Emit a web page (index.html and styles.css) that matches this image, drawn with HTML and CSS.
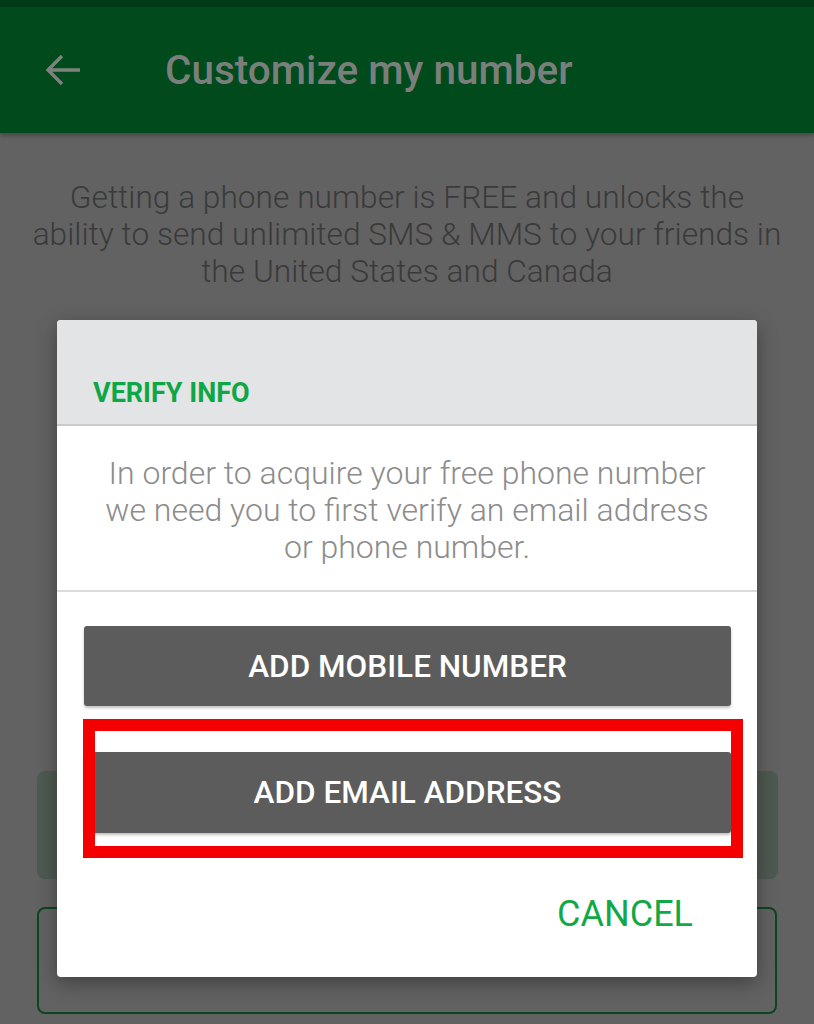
FILE: index.html
```html
<!DOCTYPE html>
<html>
<head>
<meta charset="utf-8">
<link rel="stylesheet" href="styles.css">
</head>
<body>
<div class="status"></div>
<header class="appbar">
  <svg class="back" width="40" height="40" viewBox="0 0 40 40"><path d="M37 20H6M19 6L5 20l14 14" fill="none" stroke="#7d827e" stroke-width="3.4"/></svg>
  <h1 class="title">Customize my number</h1>
</header>
<main class="content">
  <p class="intro">Getting a phone number is FREE and unlocks the ability to send unlimited SMS &amp; MMS to your friends in the United States and Canada</p>
  <div class="ghost-btn"></div>
  <div class="ghost-outline"></div>
</main>

<div class="dialog">
  <div class="dlg-head"><span class="dlg-title">VERIFY INFO</span></div>
  <p class="dlg-text">In order to acquire your free phone number we need you to first verify an email address or phone number.</p>
  <div class="dlg-actions">
    <button class="btn">ADD MOBILE NUMBER</button>
    <button class="btn btn2">ADD EMAIL ADDRESS</button>
    <div class="cancel-row"><span class="cancel">CANCEL</span></div>
  </div>
</div>
<div class="highlight"></div>
</body>
</html>
```
FILE: styles.css
```css
html, body { margin: 0; padding: 0; }
body {
  width: 814px;
  height: 1024px;
  overflow: hidden;
  background: #626262;
  font-family: Roboto, "Liberation Sans", sans-serif;
  position: relative;
}
.status { height: 7px; background: #013a17; }
.appbar {
  height: 126px;
  background: #004a1c;
  display: flex;
  align-items: center;
  box-shadow: 0 3px 4px rgba(0,0,0,0.25);
  position: relative;
}
.back { margin-left: 43px; margin-top: 0; }
.title {
  margin: 0 0 0 82px;
  font-size: 40.5px;
  font-weight: 500;
  color: #7b7f7c;
}
.content { padding-top: 46px; }
.intro {
  margin: 0 auto;
  width: 760px;
  text-align: center;
  font-size: 31.7px;
  font-weight: 300;
  line-height: 37px;
  color: #3a3a3a;
}
.ghost-btn {
  margin: 481px 36px 0 37px;
  height: 108px;
  background: #4e5a51;
  border-radius: 8px;
}
.ghost-outline {
  margin: 28px 37px 0 37px;
  height: 103px;
  border: 2px solid #0c4520;
  border-radius: 8px;
}
.dialog {
  position: absolute;
  left: 57px;
  top: 320px;
  width: 700px;
  height: 657px;
  background: #fff;
  border-radius: 4px;
  overflow: hidden;
  box-shadow: 0 6px 20px rgba(0,0,0,0.35);
}
.dlg-head {
  height: 104px;
  background: #e2e4e5;
  border-bottom: 2px solid #c8cacb;
  box-sizing: content-box;
  display: flex;
  align-items: flex-end;
  padding-left: 36px;
}
.dlg-title {
  font-size: 27px;
  font-weight: 700;
  color: #0fa646;
  padding-bottom: 15px;
}
.dlg-text {
  margin: 0;
  padding: 29px 40px 24px;
  text-align: center;
  font-size: 32px;
  font-weight: 300;
  line-height: 37px;
  color: #8c8c8c;
  border-bottom: 2px solid #dcdcdc;
}
.dlg-actions {
  padding: 34px 26px 0 27px;
  display: flex;
  flex-direction: column;
}
.btn {
  height: 80px;
  border: 0;
  border-radius: 3px;
  background: #5c5c5c;
  color: #fff;
  font-family: Roboto, "Liberation Sans", sans-serif;
  font-size: 31.5px;
  font-weight: 500;
  box-shadow: 0 2px 3px rgba(0,0,0,0.25);
  padding: 0;
}
.btn2 { margin-top: 46px; height: 81px; }
.cancel-row {
  display: flex;
  justify-content: flex-end;
  padding-right: 38px;
  margin-top: 61px;
}
.cancel {
  font-size: 36px;
  color: #12a847;
  line-height: 40px;
}
.highlight {
  position: absolute;
  left: 83px;
  top: 719px;
  width: 636px;
  height: 115px;
  border: 12px solid #f50000;
}
```
